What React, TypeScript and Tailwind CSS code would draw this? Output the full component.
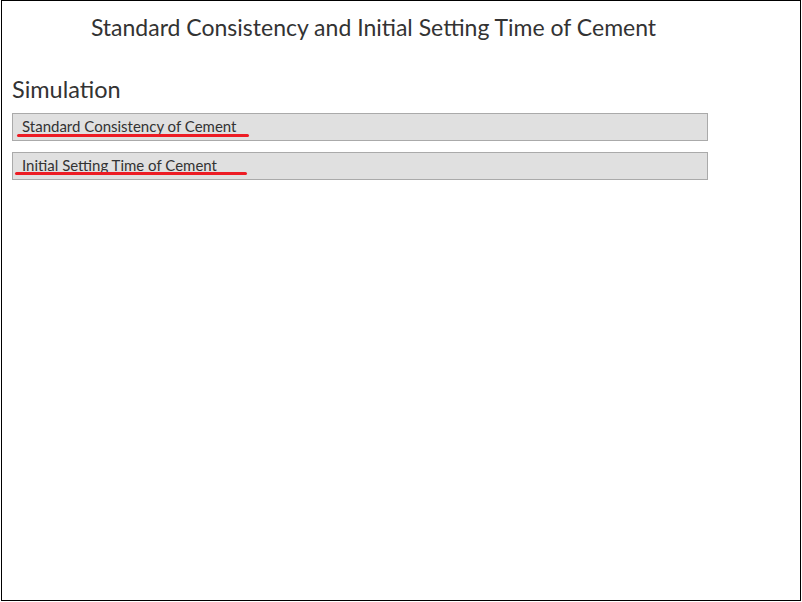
import React from 'react';

const experiments = ['Standard Consistency of Cement', 'Initial Setting Time of Cement'];

const App: React.FC = () => {
  return (
    <div className="w-[802px] h-[602px] bg-white" style={{ fontFamily: 'Lato, "Liberation Sans", sans-serif' }}>
      <div className="ml-px w-[800px] h-[601px] border border-black text-[#333333]">
        <h1 className="w-[743px] pt-[12px] text-center text-[23px] leading-[28px]">
          Standard Consistency and Initial Setting Time of Cement
        </h1>
        <h2 className="mt-[35px] pl-[10px] text-[23.5px] leading-[26px]">Simulation</h2>
        <div className="mt-[11px] pl-[10px] flex flex-col gap-[11px]">
          {experiments.map((name, i) => (
            <div key={name} className="relative w-[696px] h-[28px] bg-[#e0e0e0] border border-[#aaaaaa] pl-[9px] flex items-center">
              <span className="text-[15px] leading-[18px] -mt-[2px]">{name}</span>
              <span
                className={
                  i === 0
                    ? 'absolute left-[4px] top-[20px] w-[232px] h-[3px] bg-[#ed1c24] rounded-sm'
                    : 'absolute left-[2px] top-[19px] w-[232px] h-[3px] bg-[#ed1c24] rounded-sm'
                }
              />
            </div>
          ))}
        </div>
      </div>
    </div>
  );
};

export default App;
